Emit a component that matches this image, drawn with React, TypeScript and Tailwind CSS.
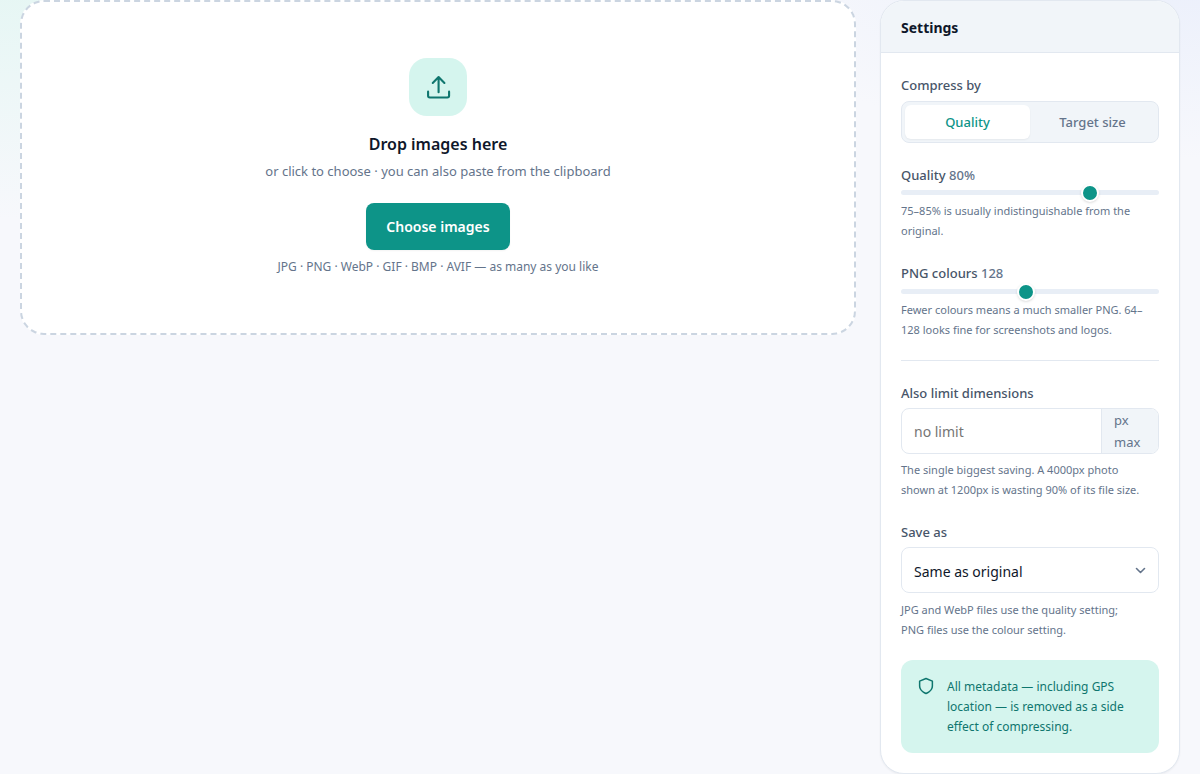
import { useState } from "react";
import type { ReactNode } from "react";

type Mode = "quality" | "target";

interface IModes
{
    name: string;
    value: Mode;
}

const modes: IModes[] = [
    {
        name: "Quality",
        value: "quality",
    },
    {
        name: "Target size",
        value: "target",
    },
];

const rangeClass =
    "block w-full h-[5px] appearance-none rounded-full bg-[#e8eef6] cursor-pointer [&::-webkit-slider-thumb]:appearance-none [&::-webkit-slider-thumb]:size-[18px] [&::-webkit-slider-thumb]:rounded-full [&::-webkit-slider-thumb]:border-2 [&::-webkit-slider-thumb]:border-white [&::-webkit-slider-thumb]:bg-[#0d9488] [&::-webkit-slider-thumb]:shadow-sm";

const labelClass = "block text-[13px] leading-5 font-medium text-[#475569]";

const Hint = ({ children }: { children: ReactNode }) => (
    <p className="text-[11px] leading-5 text-[#64748b]">{children}</p>
);

const UploadIcon = () => (
    <svg
        viewBox="0 0 24 24"
        className="size-7"
        fill="none"
        stroke="currentColor"
        strokeWidth="1.8"
        strokeLinecap="round"
        strokeLinejoin="round"
        aria-hidden="true"
    >
        <path d="M12.500 16.500V4M7.500 8.500l5-5 5 5" />
        <path d="M3.500 16v3.500a1.500 1.500 0 0 0 1.500 1.500h15a1.500 1.500 0 0 0 1.500-1.500V16" />
    </svg>
);

const ShieldIcon = () => (
    <svg
        viewBox="0 0 24 24"
        className="size-[18px] shrink-0"
        fill="none"
        stroke="currentColor"
        strokeWidth="2"
        strokeLinecap="round"
        strokeLinejoin="round"
        aria-hidden="true"
    >
        <path d="M12 22s8.500-3.500 8.500-10V5.500L12 2 3.500 5.500V12c0 6.500 8.500 10 8.500 10z" />
    </svg>
);

const DropZone = () => (
    <section className="flex flex-col items-center rounded-3xl border-2 border-dashed border-[#cbd5e1] bg-white px-5 py-14 text-center">
        <span className="flex size-[58px] items-center justify-center rounded-[18px] bg-[#d5f5ee] text-[#0f766e]">
            <UploadIcon />
        </span>
        <h2 className="mt-4 text-base leading-6 font-semibold text-[#0f172a]">
            Drop images here
        </h2>
        <p className="mt-1 text-[13px] leading-[22px] text-[#64748b]">
            or click to choose · you can also paste from the clipboard
        </p>
        <button
            type="button"
            className="mt-[21px] h-[47px] rounded-lg bg-[#0d9488] px-5 text-sm font-semibold text-white shadow-xs"
        >
            Choose images
        </button>
        <p className="mt-[7px] text-[12px] leading-5 text-[#64748b]">
            JPG · PNG · WebP · GIF · BMP · AVIF — as many as you like
        </p>
    </section>
);

const Settings = () =>
{
    const [mode, setMode] = useState<Mode>("quality");
    const [quality, setQuality] = useState(80);
    const [colours, setColours] = useState(128);

    return (
        <aside className="overflow-hidden rounded-3xl border border-[#e2e8f0] bg-white shadow-xs">
            <h2 className="border-b border-[#e2e8f0] bg-[#f1f5f9] px-5 pt-[15px] pb-[13px] text-sm leading-[23px] font-bold text-[#0f172a]">
                Settings
            </h2>
            <div className="px-5 pt-[22px] pb-5">
                <div role="group" aria-labelledby="mode-label">
                    <span id="mode-label" className={labelClass}>
                        Compress by
                    </span>
                    <div className="mt-1.5 flex h-[42px] rounded-lg border border-[#e2e8f0] bg-[#f1f5f9] p-[3px]">
                        {modes.map(({ name, value }) => (
                            <button
                                key={value}
                                type="button"
                                aria-pressed={mode === value}
                                onClick={() => setMode(value)}
                                className={
                                    mode === value
                                        ? "flex-1 rounded-md bg-white pt-0.5 text-[13px] font-medium text-[#0d9488] shadow-xs"
                                        : "flex-1 rounded-md pt-0.5 text-[13px] font-medium text-[#64748b]"
                                }
                            >
                                {name}
                            </button>
                        ))}
                    </div>
                </div>

                <div className="mt-[22px]">
                    <label htmlFor="quality" className={labelClass}>
                        Quality <span className="text-[#64748b]">{quality}%</span>
                    </label>
                    <input
                        id="quality"
                        type="range"
                        min={20}
                        max={100}
                        value={quality}
                        onChange={(e) => setQuality(Number(e.target.value))}
                        className={`mt-[5px] mb-1.5 ${rangeClass}`}
                    />
                    <Hint>75–85% is usually indistinguishable from the original.</Hint>
                </div>

                <div className="mt-[22px]">
                    <label htmlFor="colours" className={labelClass}>
                        PNG colours <span className="text-[#64748b]">{colours}</span>
                    </label>
                    <input
                        id="colours"
                        type="range"
                        min={8}
                        max={256}
                        value={colours}
                        onChange={(e) => setColours(Number(e.target.value))}
                        className={`mt-1.5 mb-1.5 ${rangeClass}`}
                    />
                    <Hint>
                        Fewer colours means a much smaller PNG. 64–128 looks fine for
                        screenshots and logos.
                    </Hint>
                </div>

                <hr className="mt-5 mb-[22px] border-[#e2e8f0]" />

                <div>
                    <label htmlFor="limit" className={labelClass}>
                        Also limit dimensions
                    </label>
                    <div className="mt-[5px] mb-1.5 flex overflow-hidden rounded-lg border border-[#e2e8f0]">
                        <input
                            id="limit"
                            type="text"
                            inputMode="numeric"
                            placeholder="no limit"
                            className="min-w-0 flex-1 px-3 pt-0.5 text-sm text-[#0f172a] outline-none placeholder:text-[#757575]"
                        />
                        <span className="w-[57px] border-l border-[#e2e8f0] bg-[#f1f5f9] px-3 text-[13px] leading-[22px] text-[#64748b]">
                            px max
                        </span>
                    </div>
                    <Hint>
                        The single biggest saving. A 4000px photo
                        <br />
                        shown at 1200px is wasting 90% of its file size.
                    </Hint>
                </div>

                <div className="mt-[22px]">
                    <label htmlFor="format" className={labelClass}>
                        Save as
                    </label>
                    <div className="relative mt-[5px] mb-[7px]">
                        <select
                            id="format"
                            className="block h-[46px] w-full appearance-none rounded-lg border border-[#e2e8f0] bg-white pt-[3px] pr-9 pl-3 text-sm text-[#0f172a]"
                        >
                            <option>Same as original</option>
                            <option>JPG</option>
                            <option>PNG</option>
                            <option>WebP</option>
                        </select>
                        <svg
                            viewBox="0 0 12 12"
                            className="pointer-events-none absolute top-[17px] right-3 size-3"
                            fill="none"
                            stroke="#64748b"
                            strokeWidth="1.6"
                            strokeLinecap="round"
                            strokeLinejoin="round"
                            aria-hidden="true"
                        >
                            <path d="M1.500 4.500 5.500 8.500l4-4" />
                        </svg>
                    </div>
                    <Hint>
                        JPG and WebP files use the quality setting;
                        <br />
                        PNG files use the colour setting.
                    </Hint>
                </div>

                <div className="mt-5 flex gap-3 rounded-xl bg-[#d5f5ee] px-4 pt-[17px] pb-4 text-[#0f766e]">
                    <ShieldIcon />
                    <p className="text-[12px] leading-5">
                        All metadata — including GPS location — is removed as a side
                        effect of compressing.
                    </p>
                </div>
            </div>
        </aside>
    );
};

const App = () => (
    <main className="min-h-screen bg-[#f7f8fc] bg-[radial-gradient(ellipse_600px_280px_at_0%_-60px,#e2f6f2,transparent),radial-gradient(ellipse_500px_220px_at_100%_-60px,#e9eefb,transparent)] px-5 font-['Noto_Sans','Open_Sans',sans-serif]">
        <div className="grid grid-cols-[minmax(0,1fr)_300px] items-start gap-6">
            <DropZone />
            <Settings />
        </div>
    </main>
);

export default App;
